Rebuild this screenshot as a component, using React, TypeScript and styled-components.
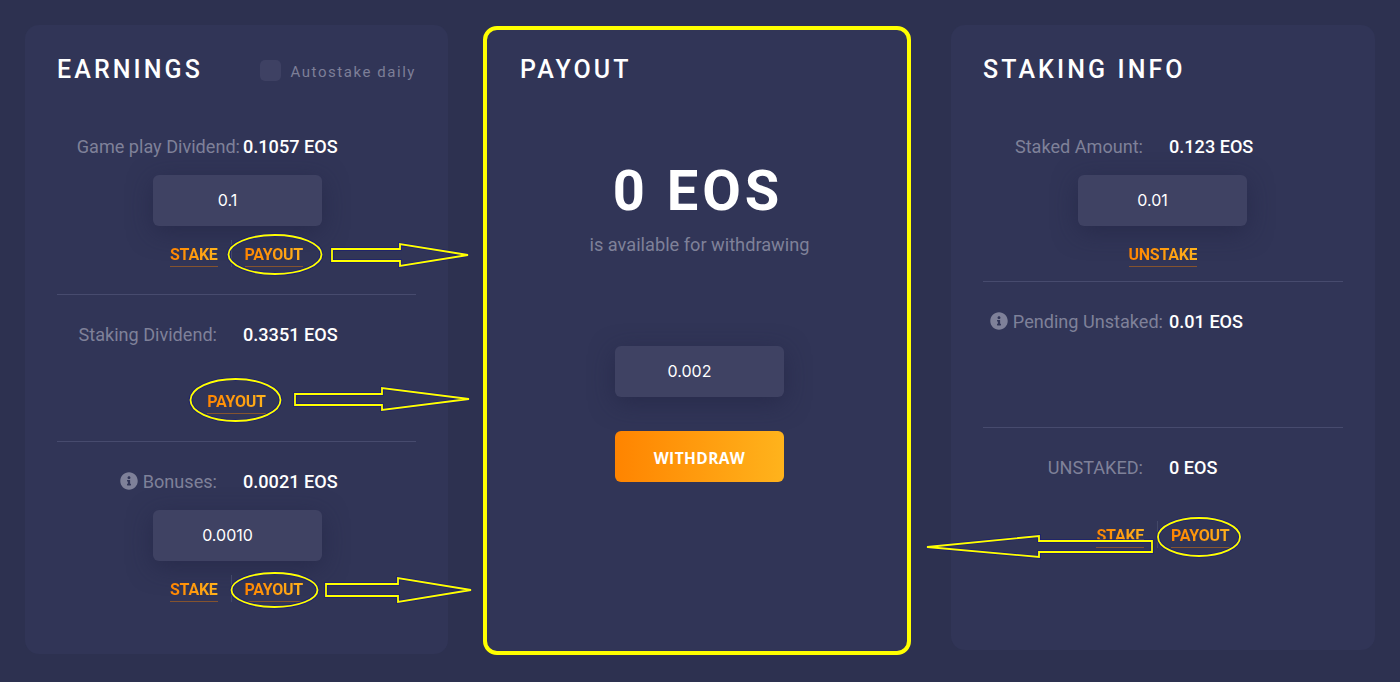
import React from "react";
import styled, { createGlobalStyle } from "styled-components";
import { FaInfoCircle } from "react-icons/fa";

const GlobalStyle = createGlobalStyle`
  html, body {
    margin: 0;
    padding: 0;
    background: #2d3150;
  }
  * {
    box-sizing: border-box;
  }
`;

type Point = [number, number];

const ellipses = [
  { cx: 275, cy: 254.5, rx: 46.5, ry: 19.5 },
  { cx: 235.5, cy: 400, rx: 45, ry: 21 },
  { cx: 274.5, cy: 590, rx: 43, ry: 17 },
  { cx: 1199, cy: 537, rx: 41, ry: 19 },
];

const arrows: Point[][] = [
  [[332, 249], [400, 249], [400, 244], [468, 255], [400, 266], [400, 261], [332, 261]],
  [[295, 394], [382, 394], [382, 388], [469, 399], [382, 410], [382, 405], [295, 405]],
  [[326, 584], [398, 584], [398, 578], [471, 590], [398, 602], [398, 596], [326, 596]],
  [[1152, 541], [1039, 541], [1039, 536], [927, 547], [1039, 557], [1039, 552], [1152, 552]],
];

function Annotations() {
  return (
    <Overlay viewBox="0 0 1400 682">
      {[{ stroke: "#1c2070", width: 3.6 }, { stroke: "#ffff00", width: 1.8 }].map((pen) => (
        <g key={pen.stroke} fill="none" stroke={pen.stroke} strokeWidth={pen.width}>
          {ellipses.map((e) => (
            <ellipse key={e.cx} {...e} />
          ))}
          {arrows.map((points) => (
            <polygon key={points[0].join()} points={points.map((p) => p.join(",")).join(" ")} />
          ))}
        </g>
      ))}
    </Overlay>
  );
}

export default function App() {
  return (
    <Page>
      <GlobalStyle />
      <Card $width={423} $height={629}>
        <Header>
          <Title>EARNINGS</Title>
          <Autostake>
            <Checkbox />
            Autostake daily
          </Autostake>
        </Header>
        <Row $top={51}>
          <Label $overhang={23}>Game play Dividend:</Label>
          <Value>0.1057 EOS</Value>
        </Row>
        <AmountInput defaultValue="0.1" $top={17} $left={96} />
        <Links $top={14}>
          <LinkText>STAKE</LinkText>
          <Separator />
          <LinkText>PAYOUT</LinkText>
        </Links>
        <Divider $top={27} />
        <Row $top={29}>
          <Label>Staking Dividend:</Label>
          <Value>0.3351 EOS</Value>
        </Row>
        <Links $top={41}>
          <LinkText>PAYOUT</LinkText>
        </Links>
        <Divider $top={27} />
        <Row $top={29}>
          <Label>
            <InfoIcon />
            Bonuses:
          </Label>
          <Value>0.0021 EOS</Value>
        </Row>
        <AmountInput defaultValue="0.0010" $top={17} $left={96} />
        <Links $top={14}>
          <LinkText>STAKE</LinkText>
          <Separator />
          <LinkText>PAYOUT</LinkText>
        </Links>
      </Card>

      <PayoutCard $width={428} $height={629} $left={35}>
        <Header>
          <Title>PAYOUT</Title>
        </Header>
        <Amount>0 EOS</Amount>
        <Hint>is available for withdrawing</Hint>
        <AmountInput defaultValue="0.002" $top={91} $left={95} />
        <WithdrawButton>WITHDRAW</WithdrawButton>
      </PayoutCard>

      <Card $width={424} $height={625} $left={40}>
        <Header>
          <Title>STAKING INFO</Title>
        </Header>
        <Row $top={51}>
          <Label>Staked Amount:</Label>
          <Value>0.123 EOS</Value>
        </Row>
        <AmountInput defaultValue="0.01" $top={17} $left={95} />
        <Links $top={14}>
          <LinkText>UNSTAKE</LinkText>
        </Links>
        <Divider $top={14} />
        <Row $top={29}>
          <Label $overhang={20}>
            <InfoIcon />
            Pending Unstaked:
          </Label>
          <Value>0.01 EOS</Value>
        </Row>
        <Divider $top={94} />
        <Row $top={29}>
          <Label>UNSTAKED:</Label>
          <Value>0 EOS</Value>
        </Row>
        <Links $top={42}>
          <LinkText>STAKE</LinkText>
          <Separator />
          <LinkText>PAYOUT</LinkText>
        </Links>
      </Card>

      <Annotations />
    </Page>
  );
}

const Page = styled.div`
  position: relative;
  width: 1400px;
  height: 682px;
  padding: 25px 25px 0;
  display: flex;
  align-items: flex-start;
  overflow: hidden;
  background: #2d3150;
  font-family: Roboto, "Liberation Sans", sans-serif;
`;

const Overlay = styled.svg`
  position: absolute;
  top: 0;
  left: 0;
  width: 1400px;
  height: 682px;
  pointer-events: none;
`;

const Card = styled.section<{ $width: number; $height: number; $left?: number }>`
  width: ${(props) => props.$width}px;
  height: ${(props) => props.$height}px;
  margin-left: ${(props) => props.$left ?? 0}px;
  padding: 30px 32px 0;
  display: flex;
  flex-direction: column;
  flex-shrink: 0;
  background: #313557;
  border-radius: 14px;
`;

const PayoutCard = styled(Card)`
  margin-top: 1px;
  padding: 25px 33px 0;
  border: 4px solid #ffff00;
`;

const Header = styled.header`
  width: 100%;
  height: 30px;
  display: flex;
  align-items: center;
  justify-content: space-between;
`;

const Title = styled.h2`
  margin: 0;
  font-size: 25px;
  font-weight: 500;
  line-height: 30px;
  letter-spacing: 3.1px;
  color: #fff;
`;

const Autostake = styled.label`
  margin-top: 3px;
  display: flex;
  align-items: center;
  gap: 10px;
  font-size: 15px;
  letter-spacing: 1.55px;
  color: #7d7f98;
`;

const Checkbox = styled.span`
  width: 21px;
  height: 21px;
  margin-top: -2px;
  background: #3e4163;
  border-radius: 5px;
`;

const Row = styled.div<{ $top: number }>`
  margin-top: ${(props) => props.$top}px;
  display: grid;
  grid-template-columns: 160px 1fr;
  column-gap: 26px;
  font-size: 18.1px;
  line-height: 22px;
`;

const Label = styled.span<{ $overhang?: number }>`
  display: flex;
  align-items: center;
  justify-content: flex-end;
  gap: 5px;
  white-space: nowrap;
  color: #7f8199;
  margin-right: ${(props) => -(props.$overhang ?? 0)}px;
`;

const Value = styled.span`
  font-weight: 500;
  white-space: nowrap;
  color: #fff;
`;

const InfoIcon = styled(FaInfoCircle)`
  width: 18px;
  height: 18px;
  margin-top: -2px;
  color: #7f8199;
`;

const AmountInput = styled.input.attrs({ readOnly: true })<{ $top: number; $left: number }>`
  display: block;
  width: 169px;
  height: 51px;
  margin: ${(props) => props.$top}px 0 0 ${(props) => props.$left}px;
  padding: 0 20px 2px 0;
  border: 0;
  outline: 0;
  border-radius: 6px;
  background: #3f4263;
  box-shadow: 0 6px 24px rgba(32, 34, 66, 0.55);
  text-align: center;
  font-family: Inter, "Open Sans", sans-serif;
  font-size: 16px;
  color: #fff;
`;

const Links = styled.div<{ $top: number }>`
  margin-top: ${(props) => props.$top}px;
  height: 27px;
  display: flex;
  justify-content: center;
  gap: 13px;
`;

const LinkText = styled.a`
  height: 27px;
  padding-top: 4px;
  font-size: 16px;
  font-weight: 700;
  line-height: 22px;
  letter-spacing: -0.25px;
  color: #ff8c0a;
  border-bottom: 1px solid #84532f;
  background: linear-gradient(90deg, #ff8400, #ffb31c);
  -webkit-background-clip: text;
  background-clip: text;
  -webkit-text-fill-color: transparent;
`;

const Separator = styled.span`
  width: 1px;
  background: #434868;
`;

const Divider = styled.hr<{ $top: number }>`
  width: 100%;
  height: 1px;
  margin: ${(props) => props.$top}px 0 0;
  border: 0;
  background: #474b6e;
`;

const Amount = styled.div`
  margin-top: 76px;
  padding-left: 2px;
  font-size: 56px;
  font-weight: 700;
  line-height: 60px;
  letter-spacing: 4px;
  text-align: center;
  color: #fff;
`;

const Hint = styled.p`
  margin: 14px 0 0;
  padding-left: 5px;
  font-size: 18.2px;
  line-height: 20px;
  text-align: center;
  color: #7f8199;
`;

const WithdrawButton = styled.button`
  width: 169px;
  height: 51px;
  margin: 34px 0 0 95px;
  padding-top: 4px;
  border: 0;
  border-radius: 6px;
  background: linear-gradient(90deg, #ff8400, #ffb31c);
  font-family: "Open Sans", sans-serif;
  font-size: 15.5px;
  font-weight: 700;
  letter-spacing: 0.4px;
  color: #fff;
`;
